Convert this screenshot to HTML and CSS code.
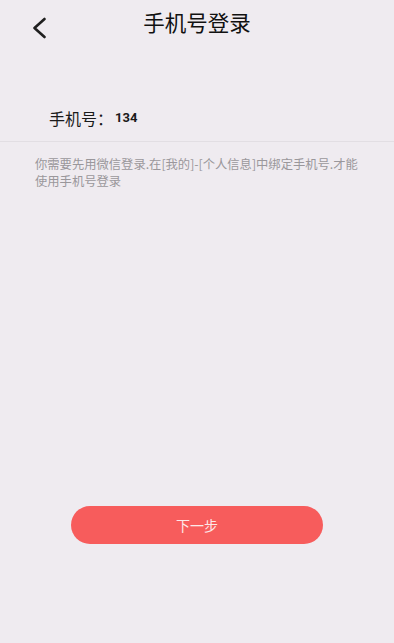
FILE: index.html
```html
<!DOCTYPE html>
<html lang="zh-CN">
<head>
<meta charset="utf-8">
<title>手机号登录</title>
<link rel="stylesheet" href="styles.css">
</head>
<body>
<div class="page">
  <header class="nav">
    <span class="back">
      <svg width="14" height="22" viewBox="0 0 14 22"><path d="M12.5 2 L2.5 11 L12.5 20" fill="none" stroke="#1f1f1f" stroke-width="2.6" stroke-linecap="round" stroke-linejoin="round"/></svg>
    </span>
    <h1 class="title">手机号登录</h1>
  </header>
  <div class="phone-row">
    <span class="label">手机号：</span><span class="num">134</span>
  </div>
  <p class="hint">你需要先用微信登录.在[我的]-[个人信息]中绑定手机号.才能使用手机号登录</p>
  <div class="spacer"></div>
  <div class="btn-wrap">
    <button class="next">下一步</button>
  </div>
</div>
</body>
</html>
```

FILE: styles.css
```css
html, body {
  margin: 0;
  padding: 0;
  background: #efebf0;
  font-family: "Noto Sans CJK SC", "Noto Sans", sans-serif;
}
.page {
  width: 394px;
  height: 643px;
  display: flex;
  flex-direction: column;
}
.nav {
  position: relative;
  height: 50px;
  display: flex;
  align-items: center;
  justify-content: center;
}
.back {
  position: absolute;
  left: 32px;
  top: 17px;
  width: 14px;
  height: 22px;
  display: flex;
}
.title {
  margin: 0;
  font-size: 21.5px;
  font-weight: 400;
  color: #111;
  line-height: 30px;
  margin-top: -7px;
}
.phone-row {
  margin-top: 44px;
  padding-left: 49px;
  height: 47px;
  display: flex;
  align-items: center;
  border-bottom: 1px solid #e2dee3;
}
.label {
  font-size: 16px;
  color: #1a1a1a;
}
.num {
  font-family: "Roboto", "Liberation Sans", sans-serif;
  font-size: 13px;
  font-weight: 700;
  color: #1a1a1a;
  margin-left: 2px;
}
.hint {
  margin: 14px 0 0;
  padding: 0 30px 0 35px;
  font-size: 12.3px;
  line-height: 17px;
  color: #9a979b;
}
.spacer {
  flex: 1;
}
.btn-wrap {
  display: flex;
  justify-content: center;
  padding-bottom: 99px;
}
.next {
  width: 252px;
  height: 38px;
  border: none;
  border-radius: 19px;
  background: #f75c5c;
  color: #fde8e8;
  font-family: "Noto Sans CJK SC", sans-serif;
  font-size: 14px;
  padding: 0;
  margin-left: 0;
}
```
